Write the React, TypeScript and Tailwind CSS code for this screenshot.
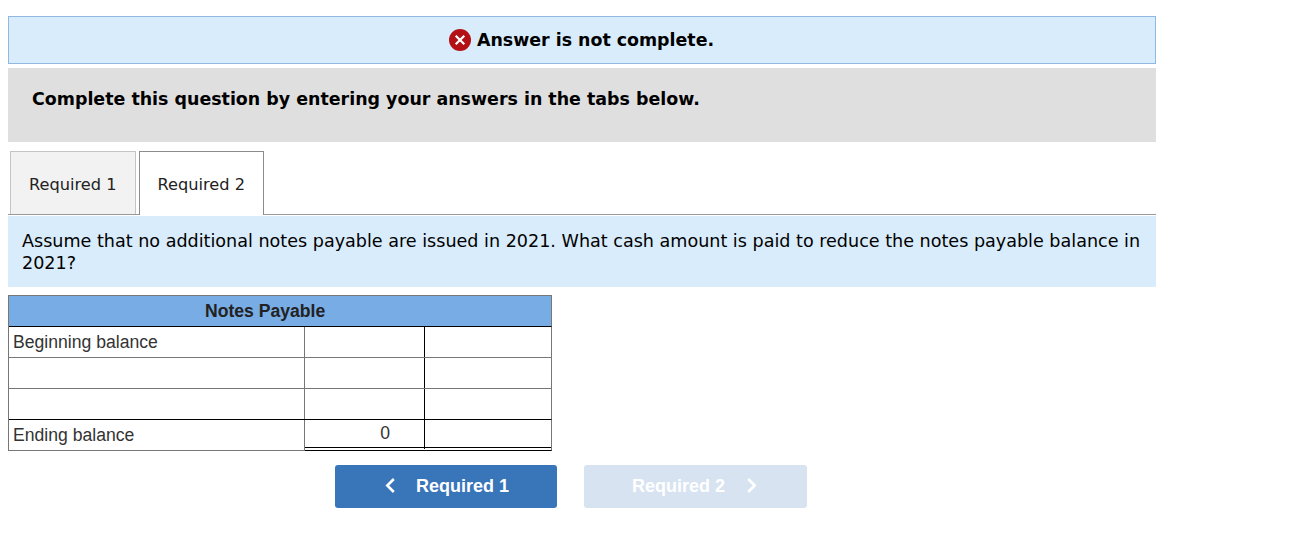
import React from "react";

const rows = [
  { label: "Beginning balance", line: "border-b-[#777777]" },
  { label: "", line: "border-b-[#777777]" },
  { label: "", line: "border-b-black" },
];

function Banner() {
  return (
    <div className="flex h-12 items-center border border-[#8fb8e3] bg-[#d9ecfb] pl-[440px]">
      <svg width="22" height="22" viewBox="0 0 22 22" className="shrink-0">
        <circle cx="11" cy="11" r="11" fill="#b31116" />
        <path d="M6.7 6.7l8.6 8.6M15.3 6.7l-8.6 8.6" stroke="#fff" strokeWidth="2.2" />
      </svg>
      <span className="ml-[6px] whitespace-nowrap text-[17.4px] leading-[22px] font-bold">
        Answer is not complete.
      </span>
    </div>
  );
}

function Tabs() {
  return (
    <div className="mt-[9px] flex h-16 items-stretch border-b border-[#999999] pl-[2px] text-[16.2px] text-[#222222]">
      <div className="flex w-[126px] items-center border border-b-0 border-[#c4c4c4] bg-[#f2f2f2] pt-[5px] pl-[18px] whitespace-nowrap">
        Required 1
      </div>
      <div className="-mb-px ml-[3px] flex w-[125px] items-center border border-b-0 border-[#8c8c8c] bg-white pt-1 pl-[17.5px] whitespace-nowrap">
        Required 2
      </div>
    </div>
  );
}

function Ledger() {
  return (
    <div className="mt-2 w-[544px] border-t border-l border-[#777777] font-['Liberation_Sans',Arial,sans-serif] text-[17.6px] text-[#333333]">
      <div className="flex h-[31px] items-center border-r border-b border-r-[#777777] border-b-black bg-[#78ace5] pl-[196px] font-bold text-[#222222]">
        <span className="whitespace-nowrap">Notes Payable</span>
      </div>
      {rows.map((row, i) => (
        <div key={i} className={`flex h-[31px] border-r border-b border-r-[#777777] ${row.line}`}>
          <div className="flex w-[296px] items-center border-r border-[#777777] pl-1">{row.label}</div>
          <div className="w-[120px] border-r border-black"></div>
          <div className="grow"></div>
        </div>
      ))}
      <div className="flex h-[31px]">
        <div className="flex w-[296px] items-center border-r border-b border-[#777777] pl-1">Ending balance</div>
        <div className="w-[120px] border-b border-black">
          <div className="h-[29px] border-r border-black">
            <div className="h-[28px] border-b border-black pr-[34px] text-right leading-[27px]">0</div>
          </div>
        </div>
        <div className="grow border-r border-b border-r-[#777777] border-b-black">
          <div className="h-[28px] border-b border-black"></div>
        </div>
      </div>
    </div>
  );
}

function Pager() {
  return (
    <div className="mt-[14px] ml-[327px] flex gap-[27px] font-['Liberation_Sans',Arial,sans-serif] text-[18px] font-bold text-white">
      <button className="flex h-[43px] w-[222px] items-center rounded-[3px] bg-[#3975b9] pl-[50px] whitespace-nowrap">
        <svg width="10" height="16" viewBox="0 0 10 16" fill="none" stroke="currentColor" strokeWidth="2.6" className="mb-[3px]">
          <path d="M8.8 2L2.3 8.5l6.5 6.5" />
        </svg>
        <span className="ml-[21px]">Required 1</span>
      </button>
      <button className="flex h-[43px] w-[223px] items-center rounded-[3px] bg-[#d7e3f1] pl-12 whitespace-nowrap">
        <span>Required 2</span>
        <svg width="10" height="16" viewBox="0 0 10 16" fill="none" stroke="currentColor" strokeWidth="2.6" className="mb-[3px] ml-[22px]">
          <path d="M1.2 2l6.5 6.5L1.2 15" />
        </svg>
      </button>
    </div>
  );
}

function App() {
  return (
    <div className="min-h-[535px] bg-white pt-4 pl-2 font-['DejaVu_Sans',Verdana,sans-serif] text-black">
      <div className="w-[1148px]">
        <Banner />
        <div className="mt-1 h-[74px] bg-[#dfdfdf] pt-5 pl-6 text-[17.43px] leading-[22px] font-bold">
          <span className="whitespace-nowrap">Complete this question by entering your answers in the tabs below.</span>
        </div>
        <Tabs />
        <div className="mt-px h-[71px] bg-[#d9ecfb] pt-[14px] pl-[14px] text-[17.57px] leading-[22px]">
          <p className="whitespace-nowrap">
            Assume that no additional notes payable are issued in 2021. What cash amount is paid to reduce the notes payable balance in
            <br />
            2021?
          </p>
        </div>
        <Ledger />
        <Pager />
      </div>
    </div>
  );
}

export default App;
